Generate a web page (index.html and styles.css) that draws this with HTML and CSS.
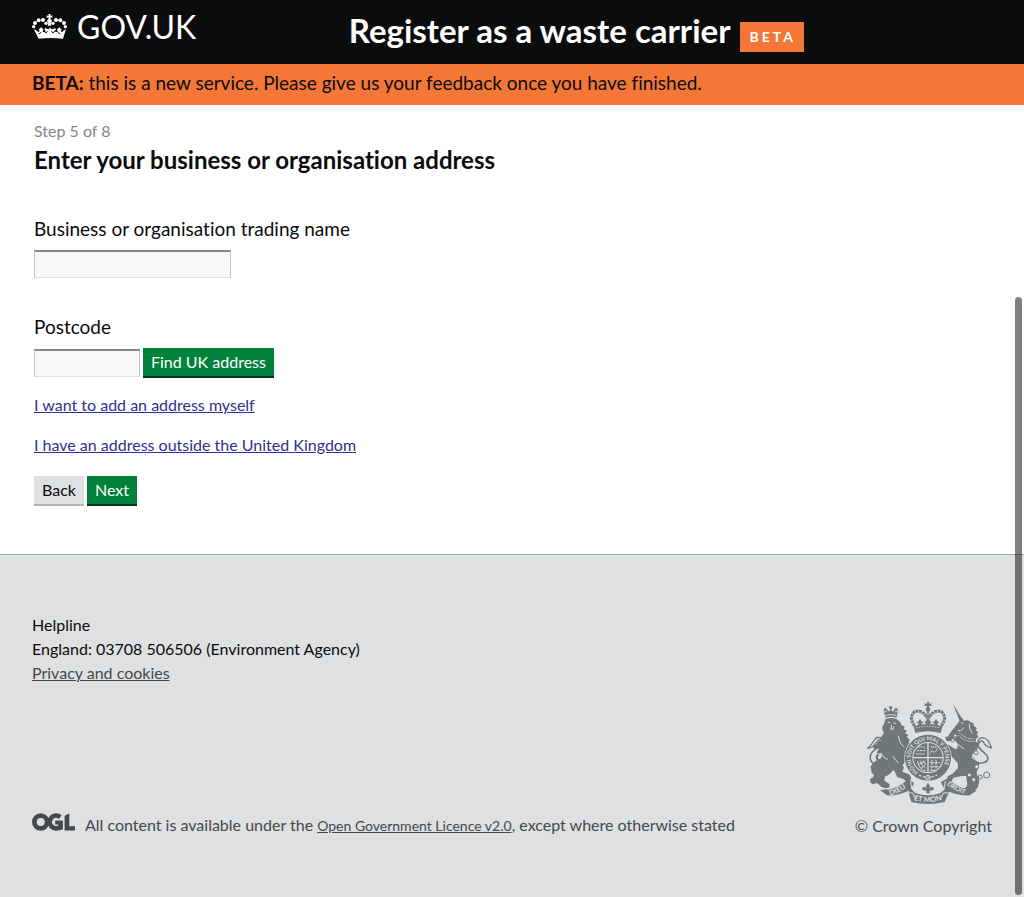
FILE: index.html
```html
<!DOCTYPE html>
<html lang="en">
<head>
<meta charset="utf-8">
<meta name="viewport" content="width=device-width, initial-scale=1">
<title>Enter your business or organisation address</title>
<link rel="stylesheet" href="styles.css">
</head>
<body>
<header class="site-header">
  <div class="header-logo">
    <a class="logo-link" href="#">
      <svg class="logo-crown" viewBox="37 41 105 75" aria-hidden="true">
        <g fill="#fff">
          <circle cx="42" cy="79" r="5"/><circle cx="46" cy="68" r="6"/><circle cx="57" cy="60" r="6"/><circle cx="70" cy="59" r="6"/><circle cx="79" cy="69" r="5"/>
          <circle cx="137" cy="79" r="5"/><circle cx="133" cy="68" r="6"/><circle cx="122" cy="60" r="6"/><circle cx="109" cy="59" r="6"/><circle cx="100" cy="69" r="5"/>
          <path d="M86 41h7l-1 6 6-2v8l-6-2 1 6q6 3 3 8l-3 3 2 8h-11l2-8-3-3q-3-5 3-8l1-6-6 2v-8l6 2z"/>
          <path d="M42 86l10 5 3 4 5-2-3-7q5 0 7-6 3 6 7 6l-2 8q6 2 9-2l-4-5 3-4 5 3 6 1 2-5h3l2 5 6-1 5-3 3 4-4 5q3 4 9 2l-2-8q4 0 7-6 2 6 7 6l-3 7 5 2 3-4 8-5-9 29q-38-4-73 0z"/>
        </g>
        <path d="M74 92l4 6 6-5M105 92l-4 6-6-5M57 101l8-5M122 101l-8-5" fill="none" stroke="#0b0c0c" stroke-width="3"/>
      </svg>
      <span class="logo-word">GOV.UK</span>
    </a>
  </div>
  <div class="header-service">
    <span class="service-name">Register as a waste carrier</span>
    <span class="beta-tag">BETA</span>
  </div>
</header>
<div class="beta-banner"><strong>BETA:</strong> this is a new service. Please give us your feedback once you have finished.</div>

<main class="content">
  <p class="step">Step 5 of 8</p>
  <h1 class="title">Enter your business or organisation address</h1>
  <form class="form">
    <div class="field">
      <label class="label" for="trading-name">Business or organisation trading name</label>
      <input class="input input-name" id="trading-name" type="text">
    </div>
    <div class="field">
      <label class="label" for="postcode">Postcode</label>
      <div class="row">
        <input class="input input-postcode" id="postcode" type="text">
        <button class="button" type="button">Find UK address</button>
      </div>
    </div>
    <p class="option"><a class="link" href="#">I want to add an address myself</a></p>
    <p class="option"><a class="link" href="#">I have an address outside the United Kingdom</a></p>
    <div class="row actions">
      <button class="button button-back" type="button">Back</button>
      <button class="button" type="submit">Next</button>
    </div>
  </form>
</main>

<footer class="site-footer">
  <div class="help">
    <p>Helpline</p>
    <p>England: 03708 506506 (Environment Agency)</p>
    <p><a class="footer-link" href="#">Privacy and cookies</a></p>
  </div>
  <div class="footer-meta">
    <div class="licence">
      <svg class="ogl" viewBox="36 44 128 53" role="img" aria-label="Open Government Licence">
        <g fill="none" stroke="#45494c" stroke-width="14">
          <circle cx="62" cy="70.500" r="19"/>
          <path d="M120 56a19 19 0 1 0 0 29"/>
        </g>
        <path d="M105 66h23v26l-12 4-2-18h-9zM133 52l14-7v38h17v13h-31z" fill="#45494c"/>
      </svg>
      <p class="licence-text">All content is available under the <a class="ogl-link" href="#">Open Government Licence v2.0</a>, except where otherwise stated</p>
    </div>
    <a class="copyright" href="#">
      <svg class="arms" viewBox="21 21 375 306" aria-hidden="true">
        <defs>
          <path id="garter" d="M174 231A52 52 0 1 1 234 231"/>
          <path id="dieu" d="M91 301Q118 294 147 272"/>
          <path id="etmon" d="M161 315Q204 327 247 315"/>
          <path id="droit" d="M260 268Q287 291 320 300"/>
        </defs>
        <g fill="#6f777b">
          <path d="M71 48l7 5 4-9 6 6 4-10 5 10 6-6 4 9 7-4-5 19q-16-6-32 0z"/>
          <circle cx="92" cy="38" r="5"/><circle cx="76" cy="44" r="5"/><circle cx="108" cy="44" r="5"/>
          <path d="M76 72q18-6 33 0l11 8 5 11 9 4-3 7 9 5-4 7 9 7-5 4 9 9-3 10 12 5-5 17-13-8 3 17 11 6-3 13-14-7-4 17-13 15-15-1-10 13q-13 13-20 13l-2 13 15 10 1 9q-10 6-20 0l-18-12-13 4q-9-4-8-15l10-7 2-7-7-5-3-20 13-15 18-9 3-17-7 3-10-2 8-12-15-1-5-9q14-2 18-13l8-3 2-13 7-8-5-13q-2-7 5-14z"/>
          <path d="M105 185l27 32-5 13 20 8q10 9 4 18l-12 3-10-8-17-4-8-17-15-21z"/>
          <path d="M60 214l12 10-11 18 7 16 16 8 3 8q-10 7-22 2l-14-13-8-28z"/>
        </g>
        <g fill="none" stroke="#6f777b" stroke-linecap="round">
          <path d="M65 210Q40 214 32 195 25 176 50 160 74 142 65 130" stroke-width="5"/>
          <path d="M65 130q-13-9-24 8t-18 21q15 1 25-15 7-10 17-14z" stroke-width="4"/>
          <path d="M53 180q-9 15 13 19" stroke-width="7"/>
        </g>
        <g fill="none" stroke="#dee0e2" stroke-width="3">
          <path d="M83 81l8 3M100 83l8 4M95 90l-3 12 8 1 1-9M76 61q16-5 32 0M66 180q8 12 17 13M99 184q7 13 17 20M115 122q3 24 18 34"/>
        </g>

        <g fill="none" stroke="#6f777b">
          <path d="M164 92C144 68 158 44 179 49q14 3 22 20" stroke-width="9" stroke-dasharray="8 2"/>
          <path d="M244 92C264 68 250 44 229 49q-14 3-22 20" stroke-width="9" stroke-dasharray="8 2"/>
          <path d="M204 44v45" stroke-width="8" stroke-dasharray="6 2"/>
        </g>
        <g fill="#6f777b">
          <path d="M201 21h7l-1 6 7-2v8l-7-1 1 5q6 6 0 11h-8q-6-5 0-11l1-5-7 1v-8l7 2z"/>
          <path d="M161 94q43-14 86 0l-5 20q-38-11-76 0z"/>
          <path d="M180 72l4 7 6 3-6 4 3 8h-14l3-8-6-4 6-3zM228 72l4 7 6 3-6 4 3 8h-14l3-8-6-4 6-3zM204 69l5 9 7 3-7 5 2 8h-14l2-8-7-5 7-3z"/>
        </g>
        <path d="M169 99q35-10 70 0" fill="none" stroke="#dee0e2" stroke-width="3" stroke-dasharray="4 4"/>

        <g fill="#6f777b">
          <path d="M279 26l30 50-9 5z"/>
          <path d="M299 77l9-8 3 8 13-1 8 6 8 2 2 10 9 5-4 6 8 8-5 5 6 9-7 3-3 10 8 4-1 16-6 12-11 7 8 14 14 9-2 16-14 23 3 29-6 18-14 1-20 10-9-3 8-14 15-5 3-10-4-25-16 2-22 4-7 15-12-3 2-16 15-8 16-17-1-15-16-17-12-15-13-5-8-13 7-11 16 7 18 12 8-2-1-15-12-15-8-1-7-8 7-9z"/>
          <path d="M255 126l17-4 9-8 9 5-5 10-12 9-13 1zM316 195l21-8 19 14-6 34 8 23-5 20q-8 10-20 9l-2-10 10-5 5-16-14-25-6-20z"/>
        </g>
        <g fill="none" stroke="#6f777b" stroke-linecap="round">
          <path d="M348 204q29 4 35-11c6-18-26-22-29-44" stroke-width="5"/>
          <path d="M354 150q-2-21 13-22 18 0 27 31-20-5-24-19-9-8-16 10z" stroke-width="4"/>
        </g>
        <g fill="none" stroke="#dee0e2" stroke-width="3">
          <path d="M303 83l7 2M294 106q14 3 16-8M328 86q-1 18 9 29"/>
          <path d="M297 112q20 21 44 19M294 120q22 22 47 19" stroke-dasharray="5 3"/>
          <path d="M284 125q-9 14 4 20l25 17M346 165l-10 23 19 12"/>
        </g>
        <g fill="#dee0e2" stroke="#6f777b" stroke-width="3">
          <circle cx="286" cy="122" r="5"/><circle cx="278" cy="136" r="5"/><circle cx="348" cy="173" r="6"/><circle cx="350" cy="215" r="6"/><circle cx="328" cy="240" r="6"/><circle cx="341" cy="254" r="6"/><circle cx="361" cy="246" r="6"/><circle cx="380" cy="240" r="9"/>
        </g>

        <path d="M60 286l17-3 8 1q35-8 60-32l17 12-9 19q-31 20-72 18z" fill="#6f777b"/>
        <path d="M351 286l-22-3-6 1q-36-8-59-34l-22 11 12 22q31 20 75 18z" fill="#6f777b"/>
        <path d="M148 277l18 17q38 14 76 0l20-17 6 12-14 32q-50 12-100 0l-8-28z" fill="#6f777b"/>
        <path d="M143 293l15 1 6 14M265 293l-15 1-6 14M152 258l3 22M256 258l-3 22" stroke="#dee0e2" stroke-width="3" fill="none"/>

        <circle cx="204" cy="188" r="71" fill="#dee0e2"/>
        <circle cx="204" cy="188" r="58" fill="none" stroke="#6f777b" stroke-width="22"/>
        <circle cx="204" cy="188" r="44" fill="#6f777b"/>
        <g fill="none" stroke="#dee0e2">
          <path d="M204 144v88M160 188h88" stroke-width="4"/>
          <path d="M171 167h26M169 177h27M173 158q10-7 22 1M213 159l5-7 4 7 5-4 6 8-9 9-9-5-4 9M210 203h31M210 215h27M211 226h17M216 195v31M228 195v28" stroke-width="3" stroke-dasharray="7 2"/>
          <path d="M173 198q2 25 24 30M182 197q1 15 15 22M190 196q2 8 7 11M177 208l18-8M183 220l14-12" stroke-width="3"/>
          <path d="M177 240q27 15 54 0" stroke-width="4" stroke-dasharray="7 6"/>
          <circle cx="204" cy="248" r="7" stroke-width="3"/>
        </g>
        <path d="M204 263l7 12-3 8q6-12 13-5 2 7-6 8l-6 2v7h-10v-7l-6-2q-8-1-6-8 7-7 13 5l-3-8z" fill="#6f777b"/>
        <g class="arms-text" fill="#dee0e2">
          <text font-size="17"><textPath href="#garter">HONI SOIT QUI MAL Y PENSE</textPath></text>
          <text font-size="22"><textPath href="#dieu">DIEU</textPath></text>
          <text font-size="22"><textPath href="#etmon">ET MON</textPath></text>
          <text font-size="20"><textPath href="#droit">DROIT</textPath></text>
        </g>
      </svg>
      <span>© Crown Copyright</span>
    </a>
  </div>
</footer>
<div class="scroll-thumb" aria-hidden="true"></div>
</body>
</html>
```
FILE: styles.css
```css
* { box-sizing: border-box; }
body {
  margin: 0;
  min-height: 100vh;
  display: flex;
  flex-direction: column;
  background: #fff;
  color: #0b0c0c;
  font-family: Lato, sans-serif;
  font-size: 16px;
  font-variant-ligatures: none;
  line-height: 24px;
}
p, h1 { margin: 0; }

.site-header {
  display: flex;
  height: 64px;
  padding: 0 32px;
  background: #0b0c0c;
  color: #fff;
}
.header-logo { flex: 0 0 33%; }
.logo-link {
  display: inline-flex;
  gap: 10px;
  padding-top: 14px;
  color: #fff;
  text-decoration: none;
}
.logo-crown { width: 35px; height: 25px; }
.logo-word {
  font-size: 32px;
  line-height: 26px;
}
.header-service {
  display: flex;
  align-items: flex-start;
  gap: 9px;
}
.service-name {
  padding-top: 12px;
  font-size: 33px;
  font-weight: 700;
  line-height: 36px;
}
.beta-tag {
  margin-top: 22px;
  padding: 0 8px 0 10px;
  background: #f47738;
  font-size: 14px;
  font-weight: 700;
  line-height: 30px;
  letter-spacing: 3px;
}
.beta-banner {
  padding: 6px 32px 9px;
  background: #f47738;
  font-size: 19px;
  line-height: 26px;
}

.content { padding: 14px 34px 48px; }
.step { color: #858688; }
.title {
  font-size: 24px;
  line-height: 34px;
}
.form { padding-top: 37px; }
.field { margin-bottom: 34px; }
.field + .field { margin-bottom: 15px; }
.label {
  display: block;
  padding-bottom: 6px;
  font-size: 19px;
  line-height: 30px;
}
.input {
  display: block;
  height: 28px;
  padding: 2px;
  border: 1px solid #bfc1c3;
  border-top: 2px solid #858688;
  border-bottom-color: #dee0e2;
  background: #f8f8f8;
  font: inherit;
}
.input-name { width: 197px; }
.input-postcode { width: 106px; }
.row {
  display: flex;
  align-items: center;
  gap: 3px;
}
.button {
  height: 30px;
  padding: 0 8px;
  border: 0;
  border-bottom: 2px solid #003618;
  background: #00823b;
  color: #fff;
  font: inherit;
}
.button-back {
  border-bottom-color: #b0b5ba;
  background: #dee0e2;
  color: #0b0c0c;
}
.option { margin-bottom: 16px; }
.link { color: #2e3191; }
.actions { padding-top: 3px; }

.site-footer {
  flex: 1;
  padding: 58px 32px;
  border-top: 1px solid #a1acb2;
  background: #dee0e2;
}
.footer-link, .footer-meta { color: #45494c; }
.footer-meta {
  display: flex;
  align-items: flex-end;
  justify-content: space-between;
  padding-top: 17px;
}
.licence {
  display: flex;
  gap: 10px;
}
.ogl {
  flex: none;
  width: 43px;
  height: 18px;
}
.ogl-link {
  color: #45494c;
  font-size: 14px;
}
.copyright {
  display: flex;
  flex-direction: column;
  align-items: flex-end;
  gap: 10px;
  color: #45494c;
  text-decoration: none;
}
.arms { width: 125px; height: 102px; }
.arms-text { font-weight: 700; }
.scroll-thumb {
  position: fixed;
  top: 297px;
  right: 2px;
  bottom: 2px;
  width: 7px;
  border-radius: 4px;
  background: rgba(0, 0, 0, 0.5);
}
```
